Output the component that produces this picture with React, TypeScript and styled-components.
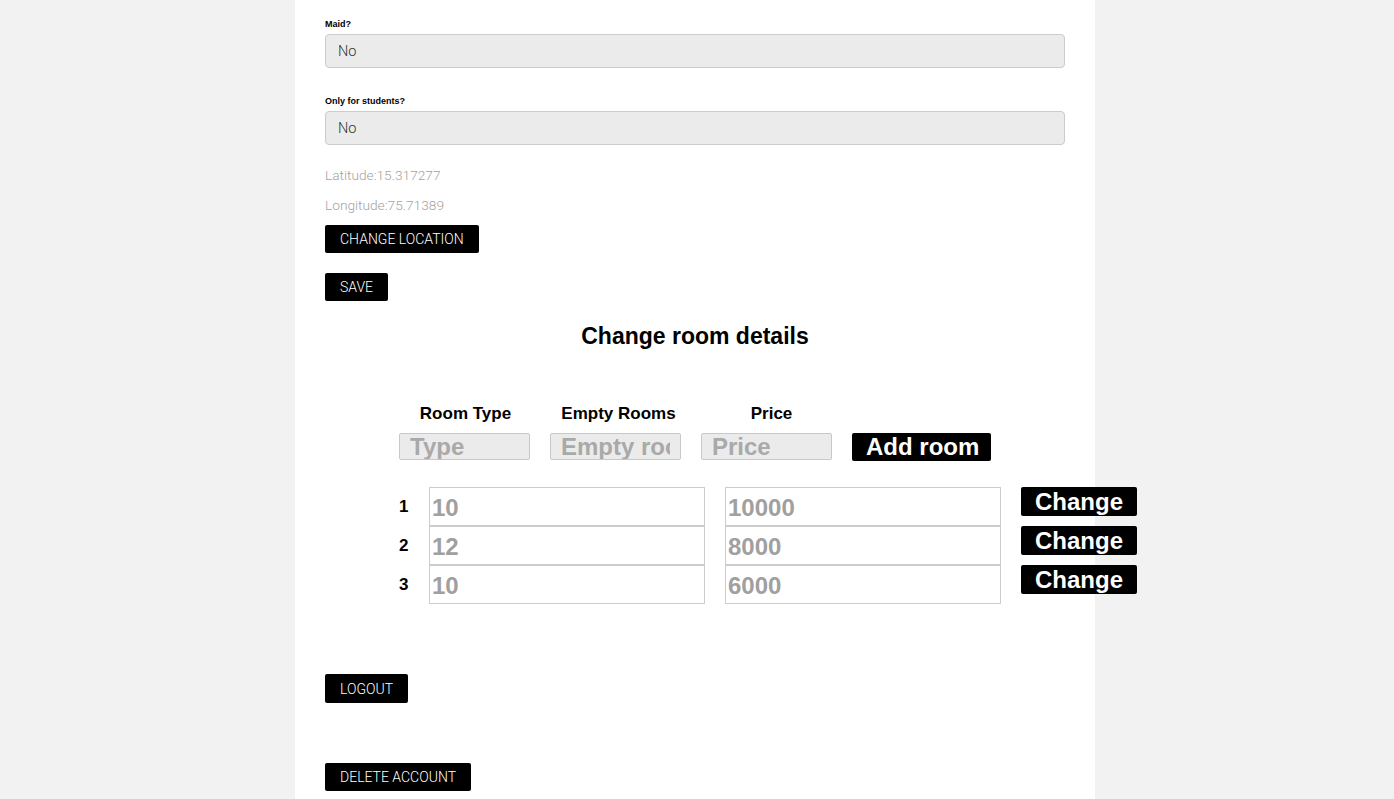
import React from "react";
import styled, { createGlobalStyle } from "styled-components";

const GlobalStyle = createGlobalStyle`
  html, body { margin: 0; padding: 0; background: #f2f2f2; }
  body { font-family: "Liberation Sans", Arial, sans-serif; }
  * { box-sizing: border-box; }
`;

const Page = styled.div`
  width: 800px;
  min-height: 799px;
  margin-left: calc(50% - 402px);
  background: #ffffff;
  padding: 18px 30px 8px 30px;
`;

const Field = styled.div`
  display: flex;
  flex-direction: column;
  margin-bottom: 27px;
`;

const Label = styled.label`
  font-family: "Liberation Sans", Arial, sans-serif;
  font-weight: 700;
  font-size: 9px;
  line-height: 12px;
  color: #000;
  margin-bottom: 4px;
`;

const Select = styled.div`
  height: 34px;
  background: #ebebeb;
  border: 1px solid #cccccc;
  border-radius: 4px;
  padding: 0 12px;
  display: flex;
  align-items: center;
  font-family: Roboto, "Liberation Sans", sans-serif;
  font-weight: 300;
  font-size: 14.5px;
  color: #333;
`;

const Coords = styled.div`
  margin-top: -6px;
`;

const Coord = styled.p<{ $after: number }>`
  margin: 0 0 ${(p) => p.$after}px 0;
  font-family: Roboto, "Liberation Sans", sans-serif;
  font-weight: 300;
  font-size: 13.7px;
  line-height: 18px;
  color: #a3a3a3;
`;

const SmallButton = styled.button<{ $after?: number; $h?: number }>`
  display: block;
  height: ${(p) => p.$h ?? 28}px;
  padding: 0 15px;
  background: #000;
  color: #fff;
  border: none;
  border-radius: 2px;
  font-family: Roboto, "Liberation Sans", sans-serif;
  font-weight: 300;
  font-size: 14px;
  text-transform: uppercase;
  margin-bottom: ${(p) => p.$after ?? 0}px;
  cursor: pointer;
`;

const Heading = styled.h2`
  margin: 21px 0 0 0;
  text-align: center;
  font-family: "Liberation Sans", Arial, sans-serif;
  font-weight: 700;
  font-size: 23px;
  line-height: 28px;
  color: #000;
`;

const RoomsSection = styled.div`
  padding-left: 74px;
  margin-top: 54px;
`;

const HeadGrid = styled.div`
  display: grid;
  grid-template-columns: 133px 133px 133px;
  column-gap: 20px;
  margin-bottom: 9px;
`;

const ColHead = styled.div`
  text-align: center;
  font-family: "Liberation Sans", Arial, sans-serif;
  font-weight: 700;
  font-size: 17px;
  line-height: 20px;
  color: #000;
`;

const AddGrid = styled.div`
  display: grid;
  grid-template-columns: 131px 131px 131px 139px;
  column-gap: 20px;
`;

const AddInput = styled.input`
  width: 131px;
  height: 27px;
  padding: 0 10px;
  background: #ebebeb;
  border: 1px solid #c8c8c8;
  border-radius: 2px;
  font-family: "Liberation Sans", Arial, sans-serif;
  font-weight: 700;
  font-size: 24px;
  color: #333;
  outline: none;
  &::placeholder { color: #a9a9a9; opacity: 1; }
`;

const BigButton = styled.button<{ $h: number }>`
  height: ${(p) => p.$h}px;
  padding: 0 14px;
  background: #000;
  color: #fff;
  border: none;
  border-radius: 2px;
  font-family: "Liberation Sans", Arial, sans-serif;
  font-weight: 700;
  font-size: 24px;
  line-height: 1;
  cursor: pointer;
  white-space: nowrap;
`;

const RoomGrid = styled.div`
  display: grid;
  grid-template-columns: 10px 276px 276px 116px;
  column-gap: 20px;
  align-items: start;
  margin-top: 26px;
`;

const RowNum = styled.div`
  align-self: center;
  font-family: "Liberation Sans", Arial, sans-serif;
  font-weight: 700;
  font-size: 17px;
  color: #000;
`;

const RoomInput = styled.input`
  width: 276px;
  height: 39px;
  padding: 3px 2px 0 2px;
  background: #fff;
  border: 1px solid #cccccc;
  font-family: "Liberation Sans", Arial, sans-serif;
  font-weight: 700;
  font-size: 24px;
  color: #333;
  outline: none;
  &::placeholder { color: #a0a0a0; opacity: 1; }
`;

const Footer = styled.div`
  margin-top: 70px;
`;

const rooms = [
  { n: 1, empty: "10", price: "10000" },
  { n: 2, empty: "12", price: "8000" },
  { n: 3, empty: "10", price: "6000" },
];

export default function App() {
  return (
    <>
      <GlobalStyle />
      <Page>
        <Field>
          <Label>Maid?</Label>
          <Select>No</Select>
        </Field>
        <Field>
          <Label>Only for students?</Label>
          <Select>No</Select>
        </Field>
        <Coords>
          <Coord $after={12}>Latitude:15.317277</Coord>
          <Coord $after={11}>Longitude:75.71389</Coord>
        </Coords>
        <SmallButton $after={20}>Change location</SmallButton>
        <SmallButton>Save</SmallButton>
        <Heading>Change room details</Heading>
        <RoomsSection>
          <HeadGrid>
            <ColHead>Room Type</ColHead>
            <ColHead>Empty Rooms</ColHead>
            <ColHead>Price</ColHead>
          </HeadGrid>
          <AddGrid>
            <AddInput placeholder="Type" />
            <AddInput placeholder="Empty rooms" />
            <AddInput placeholder="Price" />
            <BigButton $h={28}>Add room</BigButton>
          </AddGrid>
          <RoomGrid>
            {rooms.map((r) => (
              <React.Fragment key={r.n}>
                <RowNum>{r.n}</RowNum>
                <RoomInput placeholder={r.empty} />
                <RoomInput placeholder={r.price} />
                <BigButton $h={29}>Change</BigButton>
              </React.Fragment>
            ))}
          </RoomGrid>
        </RoomsSection>
        <Footer>
          <SmallButton $after={60} $h={29}>Logout</SmallButton>
          <SmallButton>Delete account</SmallButton>
        </Footer>
      </Page>
    </>
  );
}
